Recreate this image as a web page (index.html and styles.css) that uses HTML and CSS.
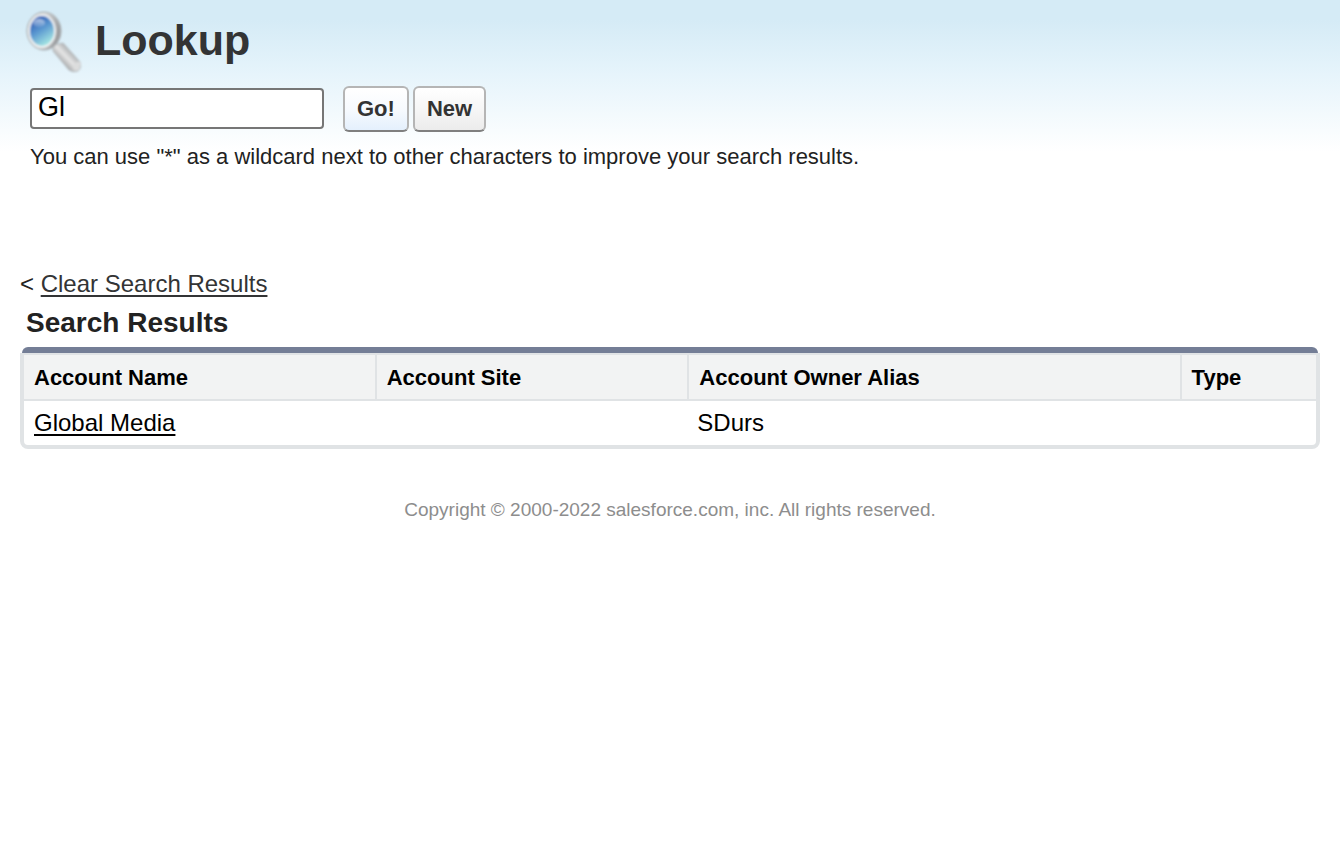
FILE: index.html
```html
<!DOCTYPE html>
<html lang="en">
<head>
<meta charset="utf-8">
<title>Lookup</title>
<link rel="stylesheet" href="styles.css">
</head>
<body>
<header class="page-header">
  <div class="title-row">
    <svg class="lookup-icon" width="64" height="64" viewBox="0 0 64 64" aria-hidden="true">
      <defs>
        <linearGradient id="lens" x1="0.2" y1="0" x2="0.75" y2="1">
          <stop offset="0" stop-color="#2a54b0"/>
          <stop offset="0.45" stop-color="#5a97d0"/>
          <stop offset="1" stop-color="#aef0e6"/>
        </linearGradient>
        <linearGradient id="ring" x1="0" y1="0" x2="1" y2="0.3">
          <stop offset="0" stop-color="#b4b8bc"/>
          <stop offset="0.5" stop-color="#d2d4d6"/>
          <stop offset="1" stop-color="#9c9ea0"/>
        </linearGradient>
        <linearGradient id="handle" x1="0.3" y1="0.7" x2="0.7" y2="0.3">
          <stop offset="0" stop-color="#a2a4a6"/>
          <stop offset="0.5" stop-color="#e6e6e6"/>
          <stop offset="1" stop-color="#a8abad"/>
        </linearGradient>
        <linearGradient id="shine" x1="0" y1="0" x2="0" y2="1">
          <stop offset="0" stop-color="#fff" stop-opacity="0.6"/>
          <stop offset="1" stop-color="#fff" stop-opacity="0.1"/>
        </linearGradient>
        <filter id="soft" x="-10%" y="-10%" width="120%" height="120%"><feGaussianBlur stdDeviation="0.8"/></filter>
      </defs>
      <g filter="url(#soft)">
        <path d="M33 35 L43 33 L60 52 Q62 58 58 61 Q53 63 49 60 L33 41 Z" fill="url(#handle)" stroke="#b4babd"/>
        <ellipse cx="57" cy="56" rx="3" ry="5" transform="rotate(35 57 56)" fill="#dcdddd"/>
        <ellipse cx="24" cy="21" rx="17" ry="19" fill="url(#ring)" stroke="#a9afb3"/>
        <ellipse cx="22" cy="21" rx="14" ry="17" fill="#f0f3f4"/>
        <ellipse cx="22" cy="21" rx="12" ry="15" fill="url(#lens)"/>
        <ellipse cx="19" cy="13" rx="6" ry="4" fill="url(#shine)"/>
      </g>
    </svg>
    <h1 class="title">Lookup</h1>
  </div>
  <form class="search-form" onsubmit="return false">
    <input class="search-box" type="text" value="Gl" aria-label="Search">
    <div class="buttons">
      <button class="btn btn-go" type="submit">Go!</button>
      <button class="btn btn-new" type="button">New</button>
    </div>
  </form>
  <p class="hint">You can use "*" as a wildcard next to other characters to improve your search results.</p>
</header>
<main class="results">
  <div class="clear">&lt; <a class="clear-link" href="#">Clear Search Results</a></div>
  <h2 class="results-title">Search Results</h2>
  <div class="table-bar"></div>
  <div class="table-frame">
    <table class="table">
      <thead>
        <tr>
          <th class="col-name" scope="col">Account Name</th>
          <th class="col-site" scope="col">Account Site</th>
          <th class="col-owner" scope="col">Account Owner Alias</th>
          <th class="col-type" scope="col">Type</th>
        </tr>
      </thead>
      <tbody>
        <tr>
          <td><a class="record-link" href="#">Global Media</a></td>
          <td></td>
          <td>SDurs</td>
          <td></td>
        </tr>
      </tbody>
    </table>
  </div>
</main>
<footer class="footer">Copyright © 2000-2022 salesforce.com, inc. All rights reserved.</footer>
</body>
</html>
```
FILE: styles.css
```css
* {
  box-sizing: border-box;
}

body {
  margin: 0;
  background: #fff;
  color: #222;
  font-family: "Liberation Sans", Arial, Helvetica, sans-serif;
  font-size: 24px;
  line-height: 28px;
}

.page-header {
  padding: 10px 20px 0;
  background: linear-gradient(#d5ebf6 0, #d5ebf6 20px, #e6f4fb 74px, #fff 152px);
}

.title-row {
  display: flex;
  align-items: flex-start;
  gap: 11px;
}

.lookup-icon {
  flex: none;
}

.title {
  margin: 4px 0 0;
  color: #333435;
  font-size: 43px;
  line-height: 52px;
}

.search-form {
  display: flex;
  align-items: flex-start;
  gap: 19px;
  margin-top: 12px;
  padding-left: 10px;
}

.search-box {
  width: 294px;
  height: 41px;
  margin: 2px 0 0;
  padding: 0 6px 2px;
  border: 2px solid #767676;
  border-radius: 4px;
  background: #fff;
  color: #000;
  font-family: inherit;
  font-size: 27px;
}

.buttons {
  display: flex;
  gap: 4px;
}

.btn {
  height: 46px;
  padding: 0 12px;
  border: 2px solid #b5b5b5;
  border-bottom-color: #7f7f7f;
  border-radius: 6px;
  color: #333;
  font-family: inherit;
  font-size: 22px;
  font-weight: bold;
}

.btn-go {
  background: linear-gradient(#fff, #f7fafe 50%, #e4f0fd);
}

.btn-new {
  background: linear-gradient(#fff, #f6f6f6 50%, #ececec);
}

.hint {
  margin: 11px 0 0;
  padding-left: 10px;
  font-size: 22px;
}

.results {
  padding: 99px 20px 0;
}

.clear-link {
  color: #333435;
  text-underline-offset: 3px;
}

.results-title {
  margin: 8px 0 7px;
  padding-left: 6px;
  font-size: 28px;
  line-height: 34px;
}

.table-bar {
  height: 6px;
  margin: 0 2px;
  border-radius: 6px 6px 0 0;
  background: #747e96;
}

.table-frame {
  border: 4px solid #e0e3e5;
  border-top-width: 2px;
  border-radius: 0 0 8px 8px;
}

.table {
  width: 100%;
  border-collapse: separate;
  border-spacing: 0;
  table-layout: fixed;
  color: #000;
}

.table th {
  height: 46px;
  padding: 2px 10px 0;
  border-right: 2px solid #e0e3e5;
  border-bottom: 2px solid #e0e3e5;
  background: #f2f3f3;
  font-size: 22px;
  text-align: left;
}

.table th:last-child {
  border-right: 0;
}

.table td {
  height: 44px;
  padding: 0 8px;
}

.table td:first-child {
  padding-left: 10px;
}

.col-name {
  width: 27.3%;
}

.col-site {
  width: 24.2%;
}

.col-owner {
  width: 38.1%;
}

.record-link {
  color: #000;
  text-underline-offset: 3px;
}

.footer {
  padding: 47px 20px;
  color: #8d8d8d;
  font-size: 19px;
  text-align: center;
}
```
